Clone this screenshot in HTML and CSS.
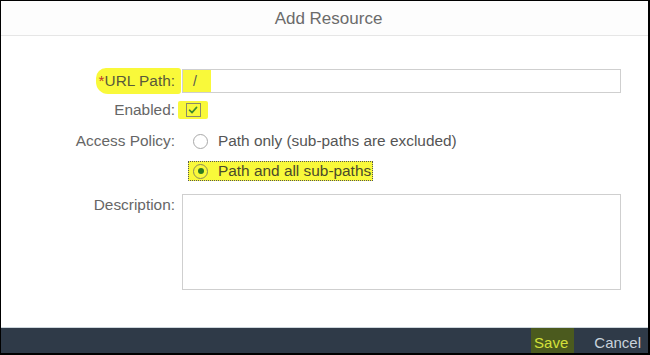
FILE: index.html
```html
<!DOCTYPE html>
<html>
<head>
<meta charset="utf-8">
<link rel="stylesheet" href="styles.css">
</head>
<body>
<div class="frame">
  <div class="header"><span class="title">Add Resource</span></div>
  <div class="content">
    <div class="row row-url">
      <div class="label"><span class="hl hl-label"><span class="req">*</span>URL Path:</span></div>
      <div class="field">
        <div class="input"><span class="hl hl-input">/</span></div>
      </div>
    </div>
    <div class="row row-enabled">
      <div class="label">Enabled:</div>
      <div class="field">
        <span class="hl hl-check">
          <span class="checkbox">
            <svg width="12" height="12" viewBox="0 0 12 12"><path d="M2.5 6.2 L5 8.6 L9.6 3.4" fill="none" stroke="#3f8a2a" stroke-width="1.6" stroke-linecap="round" stroke-linejoin="round"/></svg>
          </span>
        </span>
      </div>
    </div>
    <div class="row row-policy">
      <div class="label">Access Policy:</div>
      <div class="field option">
        <span class="radio"></span>
        <span class="opt-text">Path only (sub-paths are excluded)</span>
      </div>
    </div>
    <div class="row row-policy2">
      <div class="label"></div>
      <div class="field">
        <span class="focus-opt">
          <span class="radio checked"><span class="dot"></span></span>
          <span class="opt-text">Path and all sub-paths</span>
        </span>
      </div>
    </div>
    <div class="row row-desc">
      <div class="label">Description:</div>
      <div class="field">
        <div class="textarea"></div>
      </div>
    </div>
  </div>
  <div class="footer">
    <span class="btn save">Save</span>
    <span class="btn cancel">Cancel</span>
  </div>
</div>
</body>
</html>
```

FILE: styles.css
```css
html, body {
  margin: 0;
  padding: 0;
  background: #000;
}
body {
  font-family: "Liberation Sans", Arial, sans-serif;
}
.frame {
  box-sizing: border-box;
  width: 650px;
  height: 355px;
  border-style: solid;
  border-color: #000;
  border-width: 1px 2px 2px 1px;
  background: #fff;
  display: flex;
  flex-direction: column;
}
.header {
  height: 34px;
  border-bottom: 1px solid #e6e6e6;
  display: flex;
  align-items: center;
  justify-content: center;
  padding-left: 8px;
  background: #fdfdfd;
}
.title {
  font-size: 17px;
  color: #6b6b6b;
  padding-top: 2px;
}
.content {
  flex: 1;
  padding: 32px 27px 0 0;
}
.row {
  display: grid;
  grid-template-columns: 174px 1fr;
  column-gap: 7px;
  align-items: center;
}
.label {
  text-align: right;
  font-size: 15.4px;
  color: #666;
  white-space: nowrap;
}
.row-url { height: 24px; }
.row-enabled { height: 20px; margin-top: 8px; }
.row-policy { height: 20px; margin-top: 11px; }
.row-policy2 { height: 20px; margin-top: 9px; }
.row-desc { margin-top: 14px; align-items: start; }
.row-desc .label { padding-top: 2px; }

.hl {
  background: #f9f93a;
}
.hl-label {
  display: inline-block;
  padding: 4px 6px 4px 3px;
  margin-right: -6px;
  border-radius: 10px 3px 3px 12px;
  color: #5a5a3a;
}
.req {
  color: #c0392b;
}
.input {
  box-sizing: border-box;
  height: 24px;
  border: 1px solid #cfcfcf;
  display: flex;
  align-items: stretch;
}
.hl-input {
  display: flex;
  align-items: center;
  width: 28px;
  padding-left: 10px;
  box-sizing: border-box;
  font-size: 14px;
  color: #555;
}
.hl-check {
  display: inline-flex;
  align-items: center;
  justify-content: center;
  width: 30px;
  height: 18px;
  margin-left: -4px;
  border-radius: 2px;
}
.checkbox {
  box-sizing: border-box;
  width: 15px;
  height: 14px;
  border: 1px solid #8a8a6a;
  display: flex;
  align-items: center;
  justify-content: center;
  background: #f9f93a;
}
.option {
  display: flex;
  align-items: center;
}
.radio {
  box-sizing: border-box;
  width: 15px;
  height: 15px;
  border: 1px solid #a9a9a9;
  border-radius: 50%;
  margin-left: 11px;
  margin-right: 10px;
  display: inline-flex;
  align-items: center;
  justify-content: center;
  background: #fff;
}
.opt-text {
  font-size: 15.4px;
  color: #555;
  white-space: nowrap;
}
.focus-opt {
  display: inline-flex;
  align-items: center;
  height: 18px;
  margin-left: 6px;
  padding-right: 1px;
  background: #f9f93a;
  border: 1px dotted #555;
}
.focus-opt .radio {
  margin-left: 4px;
  background: #f9f93a;
  border-color: #8a8a5a;
}
.focus-opt .opt-text {
  color: #4a4a2a;
}
.dot {
  width: 6px;
  height: 6px;
  border-radius: 50%;
  background: #2e7a22;
}
.textarea {
  box-sizing: border-box;
  height: 96px;
  border: 1px solid #cfcfcf;
}
.footer {
  height: 25px;
  border-top: 1px solid #cdd6dc;
  background: #2f3a48;
  display: flex;
  align-items: stretch;
  justify-content: flex-end;
  padding-right: 7px;
  gap: 20px;
}
.btn {
  font-size: 15px;
  display: flex;
  align-items: center;
  padding-top: 3px;
}
.save {
  color: #d4e03a;
  background: #4b5a1e;
  padding-left: 3px;
  padding-right: 6px;
}
.cancel {
  color: #c9d2dc;
}
```
